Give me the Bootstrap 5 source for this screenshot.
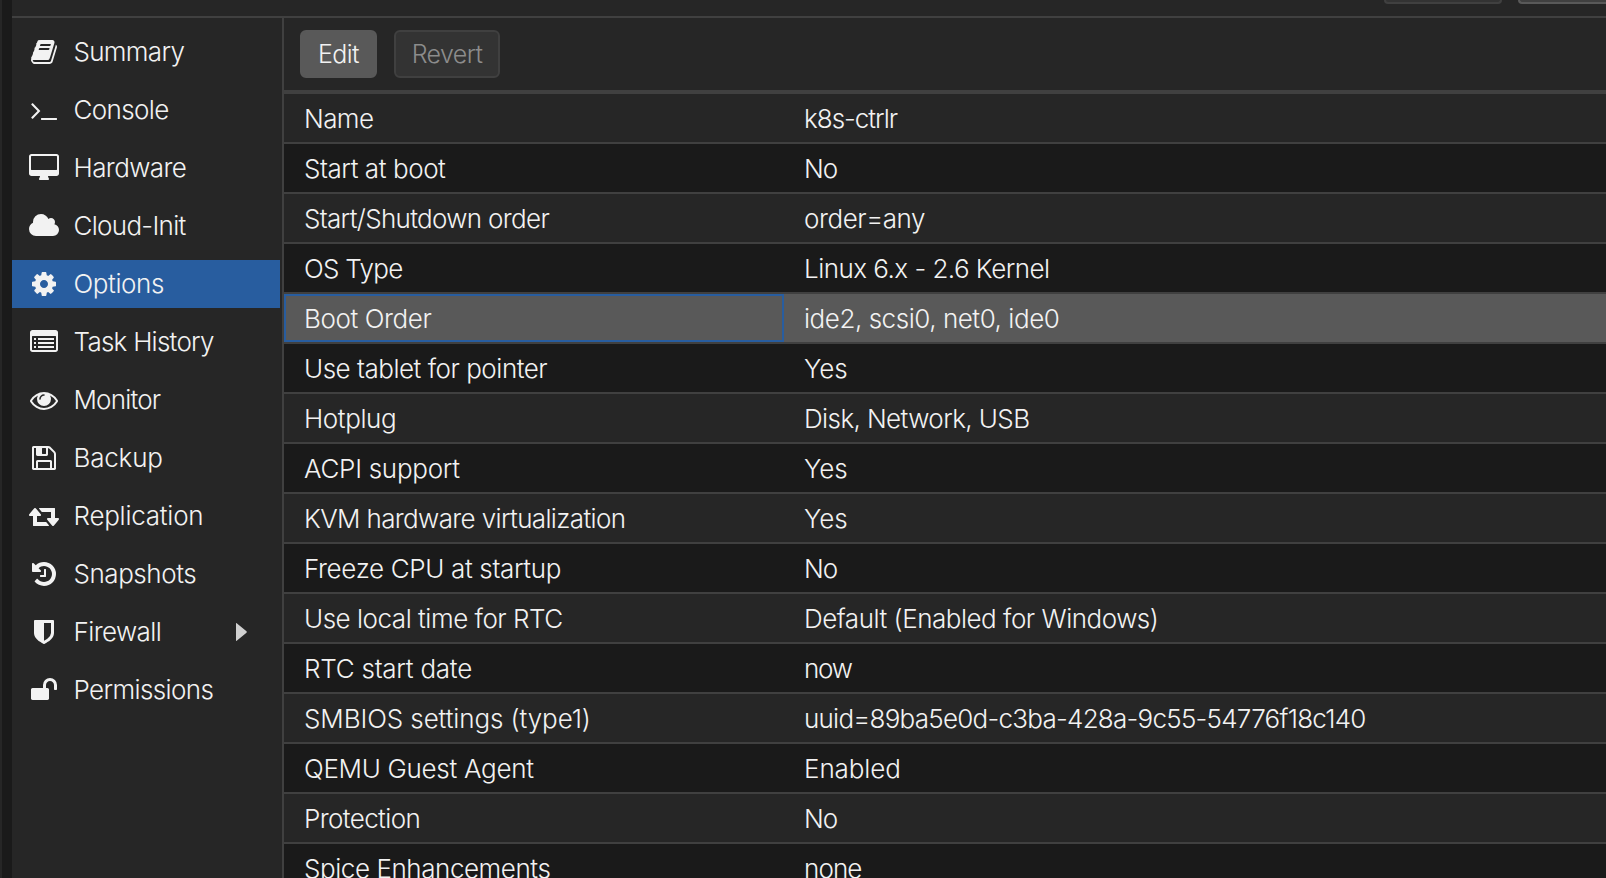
<!DOCTYPE html>
<html lang="en" data-bs-theme="dark">
<head>
<meta charset="utf-8">
<title>Options</title>
<link href="https://cdn.jsdelivr.net/npm/bootstrap@5.3.0/dist/css/bootstrap.min.css" rel="stylesheet">
<style>
body{background:#262626;color:#f2f2f2;font-family:Inter,"Liberation Sans",sans-serif;font-weight:300;font-size:26px;line-height:48px;height:878px;overflow:hidden}
.edge{width:12px;border-left:2px solid #262626;background:#1a1a1a}
.topbar{height:18px;border-bottom:2px solid #404040;padding-right:0}
.stub{height:4px;width:118px;background:#333;border:2px solid #404040;border-top:0;border-radius:0 0 8px 8px}
.stub-on{width:88px;background:#404040;border-color:#595959;border-right:0;border-radius:0 0 0 8px}
.side{width:272px;border-right:2px solid #404040;padding:10px 2px 0 0;gap:10px}
.side a{height:48px;color:#f2f2f2;text-decoration:none;white-space:nowrap}
.side a.active{background:#285d9f}
.side .ico{width:30px;margin:0 14.500px 0 17px}
.ico svg{height:28px;fill:#f2f2f2;display:block}
.arrow{width:11px;height:18px;fill:#d0d0d0;margin-right:33px}
.tools{height:76px;border-bottom:4px solid #404040;padding:12px 16px;gap:17px}
.tools .btn{height:48px;line-height:44px;padding:0;font-size:25px;font-weight:300;border:2px solid #595959;background:#595959;color:#f2f2f2;border-radius:6px;width:77px;letter-spacing:-.6px}
.tools .btn:disabled{background:#333;border-color:#404040;color:#8c8c8c;width:106px;opacity:1}
.opt{height:50px;border-bottom:2px solid #404040;white-space:nowrap;flex:none}
.opt:nth-child(odd){background:#262626}
.opt:nth-child(even){background:#1a1a1a}
.opt>div{height:48px;padding-left:20px;line-height:50px}
.opt .key{width:500px}
.opt.picked{background:#595959}
.opt.picked .key{border:2px solid #285d9f;padding-left:18px;line-height:46px}
</style>
</head>
<body class="d-flex">
<div class="edge flex-shrink-0"></div>
<div class="flex-grow-1 d-flex flex-column">
  <header class="topbar d-flex justify-content-end align-items-start gap-3 flex-shrink-0"><div class="stub"></div><div class="stub stub-on"></div></header>
  <div class="d-flex flex-grow-1 overflow-hidden">
    <nav class="side d-flex flex-column flex-shrink-0" id="side"></nav>
    <main class="flex-grow-1 overflow-hidden">
      <div class="tools d-flex"><button class="btn">Edit</button><button class="btn" disabled>Revert</button></div>
      <div class="d-flex flex-column" id="grid"></div>
    </main>
  </div>
</div>
<script src="https://cdn.jsdelivr.net/npm/bootstrap@5.3.0/dist/js/bootstrap.bundle.min.js"></script>
<script>
// Each label carries its tracking in hundredths of a pixel.
const W='0 0 1792 1792';
const items=[
['Summary',-70,W,'M1703 478q40 57 18 129l-275 906q-19 64-76.5 107.5t-122.5 43.5h-923q-77 0-148.5-53.5t-99.5-131.5q-24-67-2-127 0-4 3-27t4-37q1-8-3-21.5t-3-19.5q2-11 8-21t16.5-23.5 16.5-23.5q23-38 45-91.5t30-91.5q3-10 .5-30t-.5-28q3-11 17-28t17-23q21-36 42-92t25-90q1-9-2.5-32t.5-28q4-13 22-30.5t22-22.5q19-26 42.5-84.5t27.5-96.5q1-8-3-25.5t-2-26.5q2-8 9-18t18-23 17-21q8-12 16.5-30.5t15-35 16-36 19.5-32 26.5-23.5 36-11.5 47.5 5.5l-1 3q38-9 51-9h761q74 0 114 56t18 130l-274 906q-36 119-71.5 153.5t-128.5 34.5h-869q-27 0-38 15-11 16-1 43 24 70 144 70h923q29 0 56-15.5t35-41.5l300-987q7-22 5-57 38 15 59 43zm-1064 2q-4 13 2 22.5t20 9.5h608q13 0 25.5-9.5t16.5-22.5l21-64q4-13-2-22.5t-20-9.5h-608q-13 0-25.5 9.5t-16.5 22.5zm-83 256q-4 13 2 22.5t20 9.5h608q13 0 25.5-9.5t16.5-22.5l21-64q4-13-2-22.5t-20-9.5h-608q-13 0-25.5 9.5t-16.5 22.5z'],
['Console',-65,W,'M649 983l-466 466q-10 10-23 10t-23-10l-50-50q-10-10-10-23t10-23l393-393-393-393q-10-10-10-23t10-23l50-50q10-10 23-10t23 10l466 466q10 10 10 23t-10 23zm1079 457v64q0 14-9 23t-23 9h-960q-14 0-23-9t-9-23v-64q0-14 9-23t23-9h960q14 0 23 9t9 23z'],
['Hardware',-60,'0 0 1920 1792','M1792 992v-832q0-13-9.5-22.5t-22.5-9.5h-1600q-13 0-22.5 9.5t-9.5 22.5v832q0 13 9.5 22.5t22.5 9.5h1600q13 0 22.5-9.5t9.5-22.5zm128-832v1088q0 66-47 113t-113 47h-544q0 37 16 77.5t32 71 16 43.5q0 26-19 45t-45 19h-512q-26 0-45-19t-19-45q0-14 16-44t32-70 16-78h-544q-66 0-113-47t-47-113v-1088q0-66 47-113t113-47h1600q66 0 113 47t47 113z'],
['Cloud-Init',-70,'64 0 1920 1792','M1984 1152q0 159-112.5 271.5t-271.5 112.5h-1088q-185 0-316.5-131.5t-131.5-316.5q0-132 71-241.5t187-163.5q-2-28-2-43 0-212 150-362t362-150q158 0 286.5 88t187.5 230q70-62 166-62 106 0 181 75t75 181q0 75-41 138 129 30 213 134.5t84 239.5z'],
['Options',-40,W,'M1152 896q0-106-75-181t-181-75-181 75-75 181 75 181 181 75 181-75 75-181zm512-109v222q0 12-8 23t-20 13l-185 28q-19 54-39 91 35 50 107 138 10 12 10 25t-9 23q-27 37-99 108t-94 71q-12 0-26-9l-138-108q-44 23-91 38-16 136-29 186-7 28-36 28h-222q-14 0-24.5-8.5t-11.5-21.5l-28-184q-49-16-90-37l-141 107q-10 9-25 9-14 0-25-11-126-114-165-168-7-10-7-23 0-12 8-23 15-21 51-66.5t54-70.5q-27-50-41-99l-183-27q-13-2-21-12.5t-8-23.5v-222q0-12 8-23t19-13l186-28q14-46 39-92-40-57-107-138-10-12-10-24 0-10 9-23 26-36 98.5-107.5t94.5-71.5q13 0 26 10l138 107q44-23 91-38 16-136 29-186 7-28 36-28h222q14 0 24.5 8.5t11.5 21.5l28 184q49 16 90 37l142-107q9-9 24-9 13 0 25 10 129 119 165 170 7 8 7 22 0 12-8 23-15 21-51 66.5t-54 70.5q26 50 41 98l183 28q13 2 21 12.5t8 23.5z'],
['Task History',-75,W,'M256 640h128v128h-128zM256 896h128v128h-128zM256 1152h128v128h-128zM512 640h1024v128h-1024zM512 896h1024v128h-1024zM512 1152h1024v128h-1024zM1664 1376v-832q0-32-32-32h-1472q-32 0-32 32v832q0 32 32 32h1472q32 0 32-32zM1792 288v1088q0 66-47 113t-113 47h-1472q-66 0-113-47t-47-113v-1088q0-66 47-113t113-47h1472q66 0 113 47t47 113z'],
['Monitor',-80,W,'M1664 960q-152-236-381-353 61 104 61 225 0 185-131.5 316.5t-316.5 131.5-316.5-131.5-131.5-316.5q0-121 61-225-229 117-381 353 133 205 333.5 326.5t434.5 121.5 434.5-121.5 333.5-326.5zm-720-384q0-20-14-34t-34-14q-125 0-214.5 89.5t-89.5 214.5q0 20 14 34t34 14 34-14 14-34q0-86 61-147t147-61q20 0 34-14t14-34zm848 384q0 34-20 69-140 230-376.5 368.5t-499.5 138.5-499.5-139-376.5-368q-20-35-20-69t20-69q140-229 376.5-368t499.5-139 499.5 139 376.5 368q20 35 20 69z'],
['Backup',-20,W,'M512 1536h768v-384h-768v384zm896 0h128v-896q0-14-10-38.5t-20-34.5l-281-281q-10-10-34-20t-39-10v416q0 40-28 68t-68 28h-576q-40 0-68-28t-28-68v-416h-128v1280h128v-416q0-40 28-68t68-28h832q40 0 68 28t28 68v416zm-384-928v-320q0-13-9.5-22.5t-22.5-9.5h-192q-13 0-22.5 9.5t-9.5 22.5v320q0 13 9.5 22.5t22.5 9.5h192q13 0 22.5-9.5t9.5-22.5zm640 32v928q0 40-28 68t-68 28h-1344q-40 0-68-28t-28-68v-1344q0-40 28-68t68-28h928q40 0 88 20t76 48l280 280q28 28 48 76t20 88z'],
['Replication',-25,'0 0 1920 1792','M1280 1504q0 13-9.5 22.5t-22.5 9.5h-960q-8 0-13.5-2t-9-7-5.5-8-3-11.5-1-11.5v-600h-192q-26 0-45-19t-19-45q0-24 15-41l320-384q19-22 49-22t49 22l320 384q15 17 15 41 0 26-19 45t-45 19h-192v384h576q16 0 25 11l160 192q7 10 7 21zm640-416q0 24-15 41l-320 384q-20 23-49 23t-49-23l-320-384q-15-17-15-41 0-26 19-45t45-19h192v-384h-576q-16 0-25-12l-160-192q-7-9-7-20 0-13 9.5-22.5t22.5-9.5h960q8 0 13.5 2t9 7 5.5 8 3 11.5 1 11.5v600h192q26 0 45 19t19 45z'],
['Snapshots',-45,W,'M1664 896q0 156-61 298t-164 245-245 164-298 61q-172 0-327-72.5t-264-204.5q-7-10-6.5-22.5t8.5-20.5l137-138q10-9 25-9 16 2 23 12 73 95 179 147t225 52q104 0 198.5-40.5t163.5-109.5 109.5-163.5 40.5-198.5-40.5-198.5-109.5-163.5-163.5-109.5-198.5-40.5q-98 0-188 35.5t-160 101.5l137 138q31 30 14 69-17 40-59 40h-448q-26 0-45-19t-19-45v-448q0-42 40-59 39-17 69 14l130 129q107-101 244.5-156.5t284.5-55.5q156 0 298 61t245 164 164 245 61 298zm-640-288v448q0 14-9 23t-23 9h-320q-14 0-23-9t-9-23v-64q0-14 9-23t23-9h224v-352q0-14 9-23t23-9h64q14 0 23 9t9 23z'],
['Firewall',-60,W,'M1344 960v-640h-448v1137q119-63 213-137 235-184 235-360zm192-768v768q0 86-33.5 170.5t-83 150-118 127.5-126.5 103-121 77.5-89.5 49.5-42.5 20q-12 6-26 6t-26-6q-16-7-42.5-20t-89.5-49.5-121-77.5-126.5-103-118-127.5-83-150-33.5-170.5v-768q0-26 19-45t45-19h1152q26 0 45 19t19 45z'],
['Permissions',-62,W,'M1728 576v256q0 26-19 45t-45 19h-64q-26 0-45-19t-19-45v-256q0-106-75-181t-181-75-181 75-75 181v192h96q40 0 68 28t28 68v576q0 40-28 68t-68 28h-960q-40 0-68-28t-28-68v-576q0-40 28-68t68-28h672v-192q0-185 131.5-316.5t316.5-131.5 316.5 131.5 131.5 316.5z']];
const label=(t,s)=>`<span style="letter-spacing:${s/100}px">${t}</span>`;
document.getElementById('side').innerHTML=items.map(([t,s,v,d])=>`<a href="#" class="d-flex align-items-center${t=='Options'?' active':''}"><span class="ico d-flex justify-content-center"><svg viewBox="${v}"><path fill-rule="evenodd" d="${d}"/></svg></span>${label(t,s)}${t=='Firewall'?'<svg class="arrow ms-auto" viewBox="0 0 11 18"><path d="M0 .5Q0-.5 1 .4L10.500 8.300Q11 9 10.500 9.700L1 17.600Q0 18.500 0 17.500z"/></svg>':''}</a>`).join('');
const rows=[['Name',-60,'k8s-ctrlr',-100],['Start at boot',-43,'No',-110],['Start/Shutdown order',-67,'order=any',-45],['OS Type',-70,'Linux 6.x - 2.6 Kernel',-53],['Boot Order',-40,'ide2, scsi0, net0, ide0',-46],['Use tablet for pointer',-48,'Yes',-10],['Hotplug',-42,'Disk, Network, USB',-60],['ACPI support',-28,'Yes',-10],['KVM hardware virtualization',-64,'Yes',-10],['Freeze CPU at startup',-35,'No',-110],['Use local time for RTC',-48,'Default (Enabled for Windows)',-49],['RTC start date',-25,'now',-120],['SMBIOS settings (type1)',-10,'uuid=89ba5e0d-c3ba-428a-9c55-54776f18c140',-75],['QEMU Guest Agent',-30,'Enabled',-10],['Protection',-62,'No',-110],['Spice Enhancements',-44,'none',-90]];
document.getElementById('grid').innerHTML=rows.map(([k,a,v,b])=>`<div class="opt d-flex${k=='Boot Order'?' picked':''}"><div class="key">${label(k,a)}</div><div class="val">${label(v,b)}</div></div>`).join('');
</script>
</body>
</html>
